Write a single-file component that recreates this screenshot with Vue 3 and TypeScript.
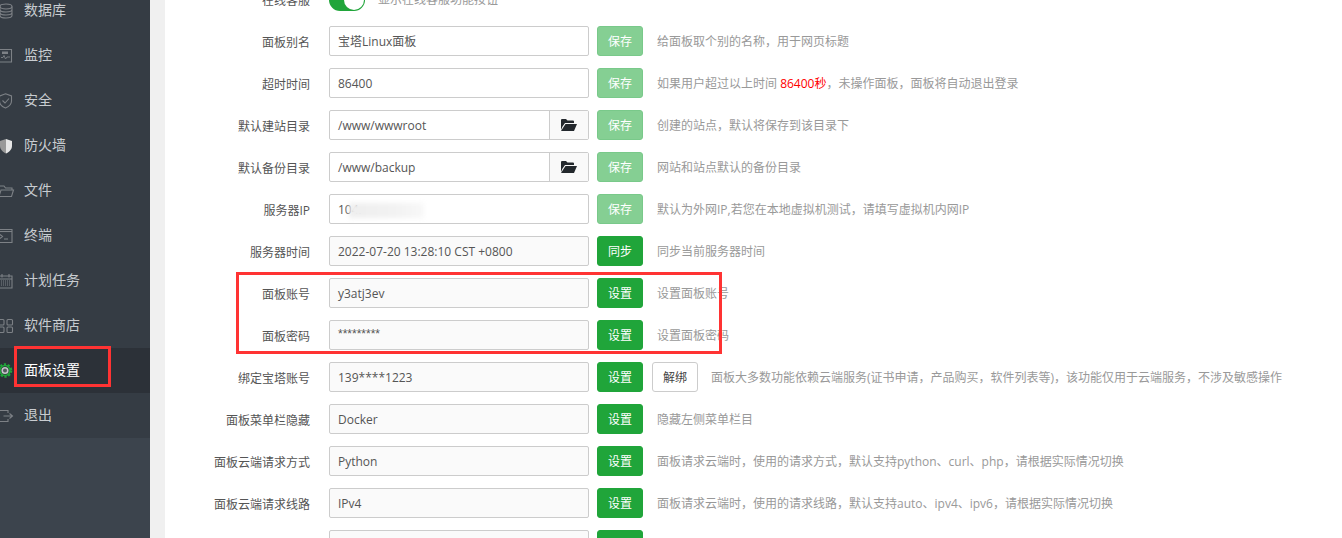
<script setup lang="ts">
interface MenuItem {
  name: string
  icon: string
  active?: boolean
}

interface SettingRow {
  label: string
  value: string
  button: string
  saved?: boolean
  readonly?: boolean
  picker?: boolean
  unbind?: boolean
  desc?: string
}

const menu: MenuItem[] = [
  { name: '数据库', icon: 'db' },
  { name: '监控', icon: 'monitor' },
  { name: '安全', icon: 'safe' },
  { name: '防火墙', icon: 'firewall' },
  { name: '文件', icon: 'folder' },
  { name: '终端', icon: 'terminal' },
  { name: '计划任务', icon: 'cron' },
  { name: '软件商店', icon: 'store' },
  { name: '面板设置', icon: 'gear', active: true },
  { name: '退出', icon: 'exit' },
]

const rows: SettingRow[] = [
  { label: '面板别名', value: '宝塔Linux面板', button: '保存', saved: true, desc: '给面板取个别的名称，用于网页标题' },
  { label: '超时时间', value: '86400', button: '保存', saved: true },
  { label: '默认建站目录', value: '/www/wwwroot', button: '保存', saved: true, picker: true, desc: '创建的站点，默认将保存到该目录下' },
  { label: '默认备份目录', value: '/www/backup', button: '保存', saved: true, picker: true, desc: '网站和站点默认的备份目录' },
  { label: '服务器IP', value: '104.', button: '保存', saved: true, desc: '默认为外网IP,若您在本地虚拟机测试，请填写虚拟机内网IP' },
  { label: '服务器时间', value: '2022-07-20 13:28:10 CST +0800', button: '同步', readonly: true, desc: '同步当前服务器时间' },
  { label: '面板账号', value: 'y3atj3ev', button: '设置', readonly: true, desc: '设置面板账号' },
  { label: '面板密码', value: '*********', button: '设置', readonly: true, desc: '设置面板密码' },
  { label: '绑定宝塔账号', value: '139****1223', button: '设置', readonly: true, unbind: true, desc: '面板大多数功能依赖云端服务(证书申请，产品购买，软件列表等)，该功能仅用于云端服务，不涉及敏感操作' },
  { label: '面板菜单栏隐藏', value: 'Docker', button: '设置', readonly: true, desc: '隐藏左侧菜单栏目' },
  { label: '面板云端请求方式', value: 'Python', button: '设置', readonly: true, desc: '面板请求云端时，使用的请求方式，默认支持python、curl、php，请根据实际情况切换' },
  { label: '面板云端请求线路', value: 'IPv4', button: '设置', readonly: true, desc: '面板请求云端时，使用的请求线路，默认支持auto、ipv4、ipv6，请根据实际情况切换' },
  { label: '', value: '', button: '设置', readonly: true },
]
</script>

<template>
  <div class="page">
    <aside class="sidebar">
      <ul class="menu">
        <li v-for="item in menu" :key="item.name" class="menu__item" :class="{ 'menu__item--active': item.active }">
          <svg class="menu__icon" viewBox="0 0 16 16" fill="none" stroke="currentColor" stroke-width="1.1">
            <template v-if="item.icon === 'db'">
              <ellipse cx="6" cy="3.5" rx="6" ry="2.5" />
              <path d="M0 3.5v9C0 14 3 15 6 15s6-1 6-2.5v-9M0 6.5C0 8 3 9 6 9s6-1 6-2.5M0 9.5C0 11 3 12 6 12s6-1 6-2.5" />
            </template>
            <template v-else-if="item.icon === 'monitor'">
              <path d="M-1 1.500h12.500v12.500H-1z" />
              <path d="M1 9.500h2l1-2 1.500 3.500 1.500-2h3" stroke-width="0.9" />
              <path d="M2 3.500h6v2.500H2z" fill="currentColor" stroke="none" />
            </template>
            <template v-else-if="item.icon === 'safe'">
              <path d="M5.500.8 11.500 3v5c0 3.500-3 5.800-6 7-3-1.200-6-3.500-6-7V3z" />
              <path d="M2.500 7.500 5 10l4-4.500" />
            </template>
            <template v-else-if="item.icon === 'firewall'">
              <path d="M6 1 12 3v5c0 3.500-3 6-6 7.500z" fill="#e6e6e6" stroke="none" />
              <path d="M6 1 0 3v5c0 3.500 3 6 6 7.500z" fill="#999" stroke="none" />
            </template>
            <template v-else-if="item.icon === 'folder'">
              <path d="M-1 13.500V3h5l1.500 2H12v2M-1 13.500 1 7h12.500l-2 6.500z" />
            </template>
            <template v-else-if="item.icon === 'terminal'">
              <path d="M-1 1.500h13v13H-1z" />
              <path d="M-1 3.500h13" />
              <path d="m0 6.500 2.500 2L0 10.500M4 11h4" />
            </template>
            <template v-else-if="item.icon === 'cron'">
              <path d="M-1 3h13v12H-1zM2 1v3.500M9 1v3.500M-1 6h13" />
              <path d="M1 8h9M1 10h9M1 12h9" stroke-width="1" stroke-dasharray="1 1" />
            </template>
            <template v-else-if="item.icon === 'store'">
              <rect x="-1.500" y="1.500" width="5.500" height="5.500" rx="1" />
              <rect x="7" y="1.500" width="5.500" height="5.500" rx="1" />
              <rect x="-1.500" y="9" width="5.500" height="5.500" rx="1" />
              <rect x="7" y="9" width="5.500" height="5.500" rx="1" />
            </template>
            <template v-else-if="item.icon === 'gear'">
              <circle cx="5" cy="7.500" r="6.200" stroke-width="2.200" stroke-dasharray="2.300 1.600" />
              <circle cx="5" cy="7.500" r="5" stroke-width="1.600" />
              <circle cx="5" cy="7.500" r="2.800" fill="#55595f" stroke="#c4c6c9" stroke-width="1.600" />
            </template>
            <template v-else>
              <path d="M8 5V2.500H-1v11h9V11M3.500 8H12M9.500 5.500 12.500 8l-3 2.500" />
            </template>
          </svg>
          <span class="menu__name">{{ item.name }}</span>
        </li>
      </ul>
    </aside>

    <main class="content">
      <div class="panel">
        <div class="setting setting--toggle">
          <label class="setting__label">在线客服</label>
          <span class="switch"><span class="switch__knob" /></span>
          <span class="setting__desc setting__desc--toggle">显示在线客服功能按钮</span>
        </div>
        <div v-for="row in rows" :key="row.label" class="setting">
          <label class="setting__label">{{ row.label }}</label>
          <div class="field" :class="{ 'field--readonly': row.readonly }">
            <span class="field__value" :class="{ 'field__value--stars': row.value.startsWith('***') }">{{ row.value }}</span>
            <span v-if="row.picker" class="field__addon">
              <svg viewBox="0 0 16 14" width="16" height="14"><path fill="#23282d" d="M0 12V2q0-1 1-1h4l1.500 1.500H12q1 0 1 1V5H4L1.500 8.500zM4.500 6H16l-3 7H0z" /></svg>
            </span>
          </div>
          <button type="button" class="btn" :class="{ 'btn--saved': row.saved }">{{ row.button }}</button>
          <button v-if="row.unbind" type="button" class="btn btn--plain">解绑</button>
          <span v-if="row.label === '超时时间'" class="setting__desc">如果用户超过以上时间 <em class="setting__em">86400秒</em>，未操作面板，面板将自动退出登录</span>
          <span v-else-if="row.desc" class="setting__desc" :class="{ 'setting__desc--after': row.unbind }">{{ row.desc }}</span>
        </div>
      </div>
    </main>

    <span class="mark mark--menu" />
    <span class="mark mark--rows" />
    <span class="smudge" />
  </div>
</template>

<style>
html,
body {
  margin: 0;
  overflow: hidden;
}
</style>

<style scoped>
.page {
  position: relative;
  display: flex;
  height: 538px;
  overflow: hidden;
  background: #f0f0f0;
  font-family: "Open Sans", "Noto Sans CJK SC", sans-serif;
  font-size: 12px;
}

.sidebar {
  flex: 0 0 150px;
  background: #3c444d;
}

.menu {
  margin: -12px 0 0;
  padding: 0;
  list-style: none;
  background: #353c44;
}

.menu__item {
  display: flex;
  align-items: center;
  height: 45px;
  color: #c8ccd0;
  font-size: 14px;
}

.menu__name {
  padding-bottom: 4px;
}

.menu__item--active {
  background: #2c3138;
  color: #fff;
}

.menu__icon {
  flex: none;
  width: 16px;
  height: 16px;
  margin-right: 8px;
  overflow: visible;
  color: #7d8186;
}

.menu__item--active .menu__icon {
  color: #20a53a;
}

.content {
  flex: 1;
  margin-left: 15px;
  background: #fff;
}

.panel {
  margin-top: -16px;
}

.setting {
  display: flex;
  align-items: center;
  height: 30px;
  margin-bottom: 12px;
  white-space: nowrap;
}

.setting__label {
  flex: 0 0 145px;
  margin-right: 19px;
  padding-top: 2px;
  color: #555;
  text-align: right;
}

.setting__desc {
  margin-left: 14px;
  color: #999;
}

.setting__desc--toggle {
  margin-left: 13px;
}

.setting__desc--after {
  margin-left: 13px;
}

.setting__em {
  color: #f00;
  font-style: normal;
}

.switch {
  position: relative;
  width: 36px;
  height: 22px;
  margin-top: 2px;
  border-radius: 11px;
  background: #20a53a;
}

.switch__knob {
  position: absolute;
  top: 1px;
  right: 1px;
  width: 20px;
  height: 20px;
  border-radius: 50%;
  background: #fff;
}

.field {
  display: flex;
  box-sizing: border-box;
  width: 260px;
  height: 30px;
  border: 1px solid #ccc;
  border-radius: 2px;
  background: #fff;
  color: #555;
}

.field--readonly {
  background: #fafafa;
}

.field__value {
  flex: 1;
  padding-left: 8px;
  line-height: 30px;
}

.field__value--stars {
  font-family: "Liberation Sans", sans-serif;
  line-height: 26px;
}

.field__addon {
  display: flex;
  flex: 0 0 38px;
  align-items: center;
  justify-content: center;
  border-left: 1px solid #ccc;
  background: #f9f9f9;
}

.btn {
  box-sizing: border-box;
  width: 46px;
  height: 30px;
  margin-left: 8px;
  padding: 0;
  border: 1px solid #20a53a;
  border-radius: 3px;
  background: #20a53a;
  color: #fff;
  font: inherit;
}

.btn--saved {
  border-color: #79c98a;
  background: #85cf93;
}

.btn--plain {
  margin-left: 9px;
  border-color: #ccc;
  background: #fff;
  color: #444;
}

.mark {
  position: absolute;
  box-sizing: border-box;
  border: 3px solid #f33;
}

.mark--menu {
  top: 346px;
  left: 14px;
  width: 97px;
  height: 41px;
}

.mark--rows {
  top: 272px;
  left: 236px;
  width: 486px;
  height: 82px;
}

.smudge {
  position: absolute;
  top: 203px;
  left: 349px;
  width: 75px;
  height: 15px;
  background: linear-gradient(90deg, #eee, #f2f2f2 60%, #f8f8f8);
  filter: blur(2.5px);
}
</style>
